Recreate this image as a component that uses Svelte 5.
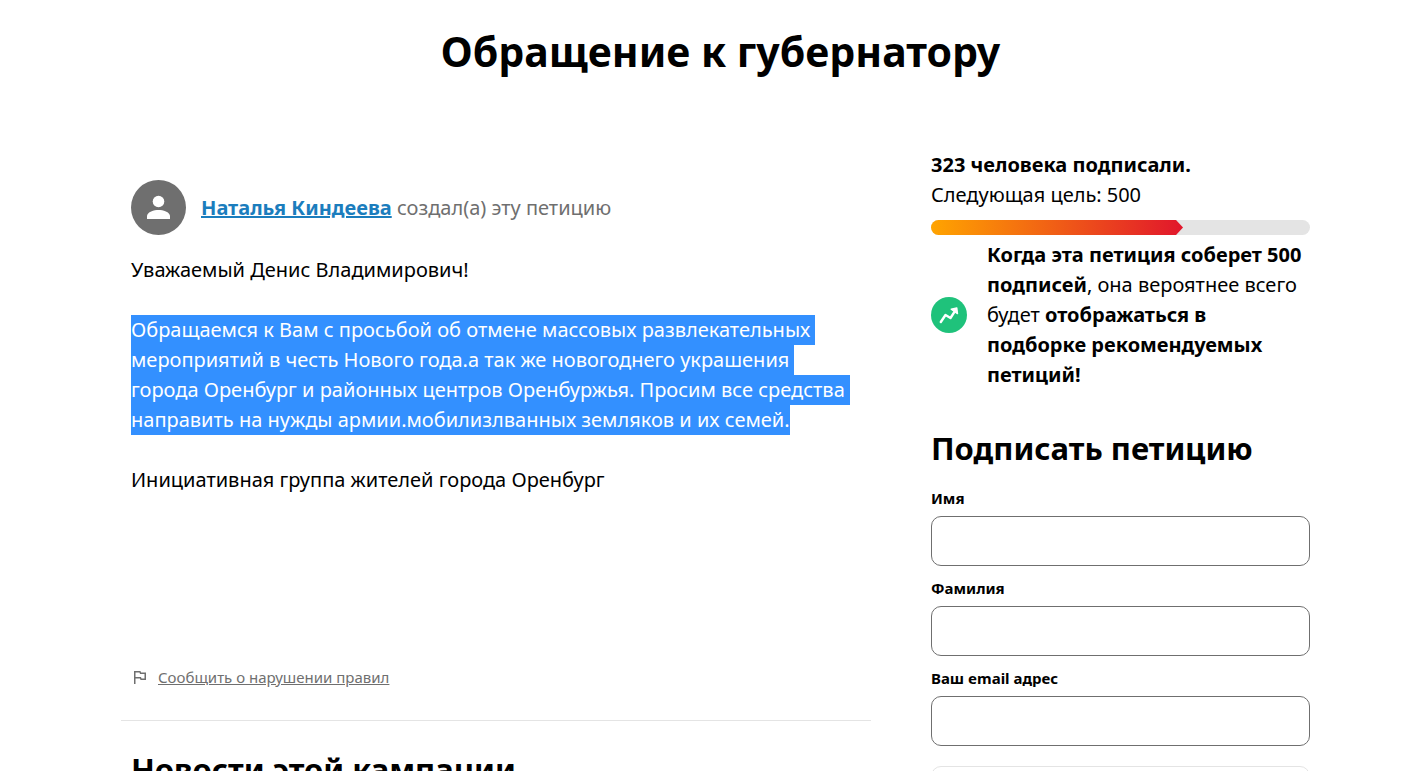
<script>
    let signed = 323;
    let goal = 500;

    const highlighted = [
        "Обращаемся к Вам с просьбой об отмене массовых развлекательных",
        "мероприятий в честь Нового года.а так же новогоднего украшения",
        "города Оренбург и районных центров Оренбуржья. Просим все средства",
        "направить на нужды армии.мобилизлванных земляков и их семей.",
    ];

    let fields = [
        { id: "first-name", label: "Имя", type: "text", value: "" },
        { id: "last-name", label: "Фамилия", type: "text", value: "" },
        { id: "email", label: "Ваш email адрес", type: "email", value: "" },
    ];

    $: progress = Math.min(100, Math.round((signed / goal) * 100) + 1.5);
</script>

<div class="page">
    <div class="container">
        <h1 class="title">Обращение к губернатору</h1>

        <div class="columns">
            <main class="petition">
                <div class="author">
                    <svg class="avatar" viewBox="0 0 55 55" aria-hidden="true">
                        <circle cx="27.5" cy="27.5" r="27.5" fill="#6f6f6f" />
                        <circle cx="27.5" cy="21.5" r="5.8" fill="#fff" />
                        <path
                            d="M16 39v-3c0-4.2 7.200-6.100 11.500-6.100S39 31.800 39 36v3z"
                            fill="#fff"
                        />
                    </svg>
                    <p>
                        <a class="author-link" href="#author">Наталья Киндеева</a>
                        создал(а) эту петицию
                    </p>
                </div>

                <div class="letter">
                    <p>Уважаемый Денис Владимирович!</p>
                    <p>
                        {#each highlighted as line}
                            <mark>{line}</mark>
                        {/each}
                    </p>
                    <p>Инициативная группа жителей города Оренбург</p>
                </div>

                <div class="report">
                    <svg class="flag" viewBox="0 0 18 18" aria-hidden="true">
                        <path
                            d="M3.750 16V3.750h5.200l.6 1.500h4.700v6h-4.200l-.6-1.500H3.750"
                            fill="none"
                            stroke="#6f6f6f"
                            stroke-width="1.500"
                        />
                    </svg>
                    <a href="#report">Сообщить о нарушении правил</a>
                </div>

                <section class="news">
                    <h2>Новости этой кампании</h2>
                </section>
            </main>

            <aside class="sidebar">
                <p><strong>{signed} человека подписали.</strong></p>
                <p>Следующая цель: {goal}</p>

                <div class="bar">
                    <div class="bar-fill" style="width: {progress}%"></div>
                </div>

                <div class="hint">
                    <svg class="trend" viewBox="0 0 36 36" aria-hidden="true">
                        <circle cx="18" cy="18" r="18" fill="#1fc27b" />
                        <path
                            d="M9.800 25l4.700-7 5 3 4.600-7.200"
                            fill="none"
                            stroke="#fff"
                            stroke-width="2.400"
                            stroke-linecap="round"
                            stroke-linejoin="round"
                        />
                        <path
                            d="M20.200 12.200l5.600-1.200.7 5.600z"
                            fill="#fff"
                            stroke="#fff"
                            stroke-width="1.400"
                            stroke-linejoin="round"
                        />
                    </svg>
                    <p>
                        <strong>Когда эта петиция соберет {goal} подписей</strong>,
                        она вероятнее всего будет
                        <strong>отображаться в подборке рекомендуемых петиций!</strong>
                    </p>
                </div>

                <h2>Подписать петицию</h2>
                <form>
                    {#each fields as field}
                        <div class="field">
                            <label for={field.id}>{field.label}</label>
                            <input
                                id={field.id}
                                type={field.type}
                                bind:value={field.value}
                            />
                        </div>
                    {/each}
                    <div class="consent"></div>
                </form>
            </aside>
        </div>
    </div>
</div>

<style>
    :global(body) {
        margin: 0;
        background: #fff;
        color: #000;
        font-family: "Noto Sans", sans-serif;
        font-size: 20px;
        line-height: 30px;
    }

    p,
    h1,
    h2 {
        margin: 0;
    }

    .page {
        padding-left: 26px;
    }

    .container {
        max-width: 1199px;
        margin: 0 auto;
    }

    .title {
        padding: 26px 10px 0;
        font-size: 41px;
        line-height: 50px;
        text-align: center;
    }

    .columns {
        display: grid;
        grid-template-columns: minmax(0, 1fr) 399px;
        gap: 50px;
        padding-top: 74px;
    }

    h2 {
        font-size: 31px;
        line-height: 40px;
    }

    /* Petition text */
    .petition {
        padding-top: 30px;
    }

    .author {
        display: flex;
        align-items: center;
        gap: 15px;
        padding: 0 10px;
        color: #6f6f6f;
    }

    .avatar {
        width: 55px;
        height: 55px;
        flex-shrink: 0;
    }

    .author-link {
        color: #1b7dbd;
        font-weight: 700;
    }

    .letter {
        display: flex;
        flex-direction: column;
        gap: 30px;
        min-height: 407px;
        padding: 20px 10px 0;
    }

    mark {
        display: block;
        width: fit-content;
        padding-right: 5px;
        background: #3390ff;
        color: #fff;
    }

    mark:last-child {
        padding-right: 0;
    }

    .report {
        display: flex;
        align-items: center;
        gap: 9px;
        padding: 0 10px 28px;
        border-bottom: 1px solid #e4e4e4;
        font-size: 15px;
    }

    .report a {
        color: #6f6f6f;
    }

    .flag {
        width: 18px;
        height: 18px;
    }

    .news {
        padding: 28px 10px 0;
    }

    /* Sign form */
    .sidebar {
        padding: 0 10px;
    }

    .bar {
        height: 15px;
        margin: 10px 0 5px;
        overflow: hidden;
        border-radius: 8px;
        background: #e4e4e4;
    }

    .bar-fill {
        height: 100%;
        background: linear-gradient(to right, #ffa400, #e1162c);
        clip-path: polygon(0 0, calc(100% - 7px) 0, 100% 50%, calc(100% - 7px) 100%, 0 100%);
    }

    .hint {
        display: flex;
        align-items: center;
        gap: 20px;
        margin-bottom: 38px;
    }

    .trend {
        width: 36px;
        height: 36px;
        flex-shrink: 0;
    }

    form {
        padding-top: 20px;
    }

    .field {
        display: flex;
        flex-direction: column;
        gap: 8px;
        margin-bottom: 12px;
    }

    label {
        font-size: 15px;
        font-weight: 700;
        line-height: 20px;
    }

    input {
        box-sizing: border-box;
        width: 100%;
        height: 50px;
        padding: 0 15px;
        border: 1px solid #6f6f6f;
        border-radius: 10px;
        background: #fff;
        font: inherit;
    }

    .consent {
        height: 80px;
        margin-top: 20px;
        border: 1px solid #e4e4e4;
        border-radius: 10px;
    }

    @media (max-width: 900px) {
        .columns {
            grid-template-columns: minmax(0, 1fr);
        }
    }
</style>
